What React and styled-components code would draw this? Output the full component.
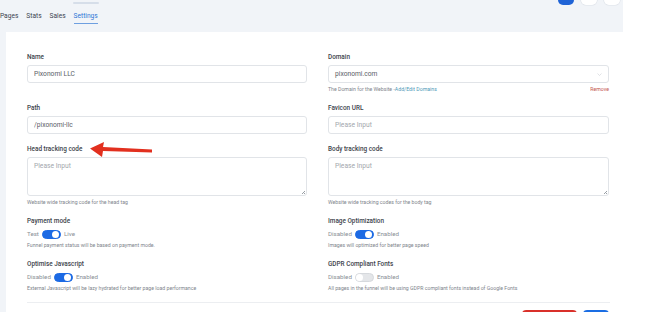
import React from "react";
import styled, { createGlobalStyle } from "styled-components";

const GlobalStyle = createGlobalStyle`
  body {
    margin: 0;
    background: #ffffff;
    font-family: Roboto, "Liberation Sans", sans-serif;
  }
`;

function App() {
  return (
    <>
      <GlobalStyle />
      <Page>
        <TopBar>
          <TopStub />
          <Tabs>
            <Tab>Pages</Tab>
            <Tab>Stats</Tab>
            <Tab>Sales</Tab>
            <Tab $active>Settings</Tab>
          </Tabs>
          <TopActions>
            <TopButton $primary />
            <TopButton />
            <TopButton />
          </TopActions>
        </TopBar>

        <Card>
          <Grid>
            <Field>
              <Label>Name</Label>
              <Input defaultValue="Pixonomi LLC" />
            </Field>
            <Field>
              <Label>Domain</Label>
              <SelectBox>
                <span>pixonomi.com</span>
                <Chevron viewBox="0 0 10 6">
                  <path d="M1 1l4 4 4-4" fill="none" stroke="#c3c7cc" strokeWidth="1" />
                </Chevron>
              </SelectBox>
              <HelpRow>
                <Help>
                  The Domain for the Website -<HelpLink>Add/Edit Domains</HelpLink>
                </Help>
                <Remove>Remove</Remove>
              </HelpRow>
            </Field>

            <Field>
              <Label>Path</Label>
              <Input defaultValue="/pixonomi-llc" />
            </Field>
            <Field>
              <Label>Favicon URL</Label>
              <Input placeholder="Please Input" />
            </Field>

            <Field>
              <Label>Head tracking code</Label>
              <AreaWrap>
                <TextArea placeholder="Please Input" />
                <Grip />
              </AreaWrap>
              <Help>Website wide tracking code for the head tag</Help>
            </Field>
            <Field>
              <Label>Body tracking code</Label>
              <AreaWrap>
                <TextArea placeholder="Please Input" />
                <Grip />
              </AreaWrap>
              <Help>Website wide tracking codes for the body tag</Help>
            </Field>

            <Field>
              <Label>Payment mode</Label>
              <SwitchRow>
                <SwitchText>Test</SwitchText>
                <Switch $on />
                <SwitchText>Live</SwitchText>
              </SwitchRow>
              <Help>Funnel payment status will be based on payment mode.</Help>
            </Field>
            <Field>
              <Label>Image Optimization</Label>
              <SwitchRow>
                <SwitchText>Disabled</SwitchText>
                <Switch $on />
                <SwitchText>Enabled</SwitchText>
              </SwitchRow>
              <Help>Images will optimized for better page speed</Help>
            </Field>

            <Field>
              <Label>Optimise Javascript</Label>
              <SwitchRow>
                <SwitchText>Disabled</SwitchText>
                <Switch $on />
                <SwitchText>Enabled</SwitchText>
              </SwitchRow>
              <Help>External Javascript will be lazy hydrated for better page load performance</Help>
            </Field>
            <Field>
              <Label>GDPR Compliant Fonts</Label>
              <SwitchRow>
                <SwitchText>Disabled</SwitchText>
                <Switch />
                <SwitchText>Enabled</SwitchText>
              </SwitchRow>
              <Help>All pages in the funnel will be using GDPR compliant fonts instead of Google Fonts</Help>
            </Field>
          </Grid>

          <Divider />
          <Footer>
            <FooterButton $color="#d9302a" $width={55} />
            <FooterButton $color="#1a6de3" $width={26} />
          </Footer>
        </Card>

        <Arrow viewBox="0 0 66 18">
          <path
            d="M2 7.5 L16 1 L15 6 L64 8.5 L64 11.5 L15 10 L14 16 Z"
            fill="#e2301f"
          />
        </Arrow>
      </Page>
    </>
  );
}

const Page = styled.div`
  position: relative;
  width: 623px;
  height: 312px;
  overflow: hidden;
  background: #f1f4f8;
`;

const TopBar = styled.div`
  position: relative;
  height: 32px;
  display: flex;
  justify-content: space-between;
  align-items: flex-start;
`;

const TopStub = styled.div`
  position: absolute;
  left: 73px;
  top: 2px;
  width: 26px;
  height: 2px;
  border-radius: 1px;
  background: #d6dee9;
`;

const Tabs = styled.div`
  display: flex;
  gap: 8px;
  margin-left: 0;
  padding-top: 12px;
`;

const Tab = styled.div`
  font-size: 6.6px;
  line-height: 9px;
  padding-bottom: 2px;
  color: ${({ $active }) => ($active ? "#2d74d6" : "#3b4350")};
  border-bottom: 1.5px solid ${({ $active }) => ($active ? "#6e9fe0" : "transparent")};
`;

const TopActions = styled.div`
  display: flex;
  gap: 7px;
  margin-right: 3px;
`;

const TopButton = styled.div`
  width: 16px;
  height: 5px;
  border-radius: 0 0 5px 5px;
  background: ${({ $primary }) => ($primary ? "#1f63d6" : "#ffffff")};
  box-shadow: ${({ $primary }) => ($primary ? "none" : "0 0 0 0.6px #dde2e8")};
`;

const Card = styled.div`
  margin-left: 6px;
  background: #ffffff;
  padding: 21px 14px 0 21px;
  height: 300px;
`;

const Grid = styled.div`
  display: grid;
  grid-template-columns: 280px 281px;
  column-gap: 21px;
  row-gap: 11px;
`;

const Field = styled.div`
  display: flex;
  flex-direction: column;
`;

const Label = styled.div`
  font-size: 6.4px;
  font-weight: 500;
  line-height: 9px;
  color: #3d434b;
  margin-bottom: 3px;
`;

const inputBase = `
  box-sizing: border-box;
  width: 100%;
  border: 0.8px solid #e1e4e8;
  border-radius: 3px;
  background: #ffffff;
  font-family: Roboto, "Liberation Sans", sans-serif;
  font-size: 6.7px;
  color: #5b6068;
  padding: 0 6px;
  outline: none;
  &::placeholder {
    color: #a3a7ad;
  }
`;

const Input = styled.input`
  ${inputBase}
  height: 18px;
`;

const SelectBox = styled.div`
  ${inputBase}
  height: 18px;
  display: flex;
  align-items: center;
  justify-content: space-between;
`;

const Chevron = styled.svg`
  width: 5px;
  height: 3px;
`;

const AreaWrap = styled.div`
  position: relative;
`;

const TextArea = styled.textarea`
  ${inputBase}
  display: block;
  height: 39px;
  padding-top: 4px;
  resize: none;
`;

const Grip = styled.div`
  position: absolute;
  right: 2px;
  bottom: 2px;
  width: 3px;
  height: 3px;
  background: linear-gradient(
    135deg,
    transparent 45%,
    #9aa0a6 45%,
    #9aa0a6 55%,
    transparent 55%,
    transparent 75%,
    #9aa0a6 75%,
    #9aa0a6 85%,
    transparent 85%
  );
`;

const HelpRow = styled.div`
  display: flex;
  justify-content: space-between;
  align-items: center;
`;

const Help = styled.div`
  font-size: 5.2px;
  line-height: 7px;
  color: #80858c;
  margin-top: 3px;
`;

const HelpLink = styled.span`
  color: #4f9ab8;
`;

const Remove = styled.div`
  font-size: 5.2px;
  line-height: 7px;
  margin-top: 3px;
  color: #c4574f;
`;

const SwitchRow = styled.div`
  display: flex;
  align-items: center;
  gap: 3px;
  height: 10px;
`;

const SwitchText = styled.span`
  font-size: 6.2px;
  color: #8a8f96;
`;

const Switch = styled.div`
  position: relative;
  box-sizing: border-box;
  width: 19px;
  height: 9px;
  border-radius: 5px;
  background: ${({ $on }) => ($on ? "#1c6ae4" : "#e4e6e9")};
  border: 0.6px solid ${({ $on }) => ($on ? "#1c6ae4" : "#d6d9dd")};

  &::after {
    content: "";
    position: absolute;
    top: 0.5px;
    ${({ $on }) => ($on ? "right: 0.5px;" : "left: 0.5px;")}
    width: 7px;
    height: 7px;
    border-radius: 50%;
    background: #ffffff;
  }
`;

const Divider = styled.div`
  height: 1px;
  background: #eceef1;
  margin-top: 10px;
  width: 583px;
`;

const Footer = styled.div`
  display: flex;
  justify-content: flex-end;
  gap: 6px;
  width: 582px;
  padding-top: 7px;
`;

const FooterButton = styled.div`
  width: ${({ $width }) => $width}px;
  height: 16px;
  border-radius: 4px;
  background: ${({ $color }) => $color};
`;

const Arrow = styled.svg`
  position: absolute;
  left: 88px;
  top: 141px;
  width: 66px;
  height: 18px;
`;

export default App;
